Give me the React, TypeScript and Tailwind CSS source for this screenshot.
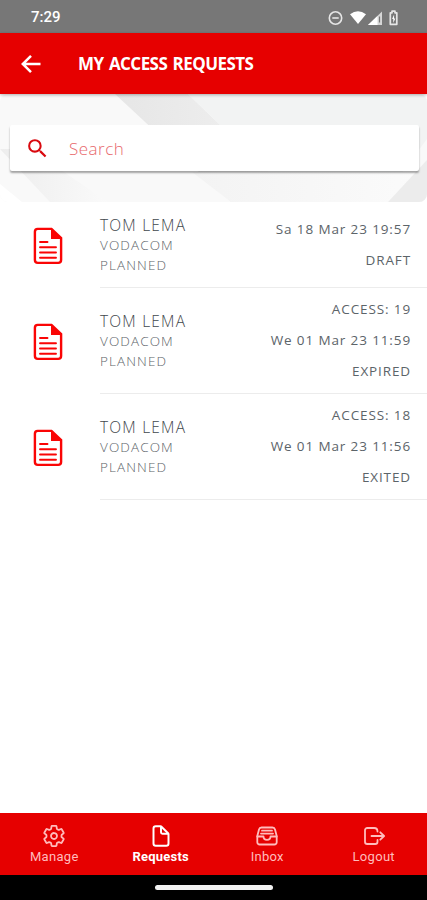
import type { ReactNode } from "react";
import { IoDocumentOutline, IoSettingsOutline } from "react-icons/io5";
import { MdSearch } from "react-icons/md";

type AccessRequest = {
  id: string;
  name: string;
  company: string;
  type: string;
  details: string[];
};

const REQUESTS: AccessRequest[] = [
  {
    id: "draft",
    name: "TOM LEMA",
    company: "VODACOM",
    type: "PLANNED",
    details: ["Sa 18 Mar 23 19:57", "DRAFT"],
  },
  {
    id: "19",
    name: "TOM LEMA",
    company: "VODACOM",
    type: "PLANNED",
    details: ["ACCESS: 19", "We 01 Mar 23 11:59", "EXPIRED"],
  },
  {
    id: "18",
    name: "TOM LEMA",
    company: "VODACOM",
    type: "PLANNED",
    details: ["ACCESS: 18", "We 01 Mar 23 11:56", "EXITED"],
  },
];

function InboxIcon() {
  return (
    <svg
      width="24"
      height="24"
      viewBox="0 0 24 24"
      fill="none"
      stroke="currentColor"
      strokeWidth="1.8"
      strokeLinecap="round"
      strokeLinejoin="round"
    >
      <path d="M2.300 12L4 5.500Q4.500 3.500 6.500 3.500h11Q19.500 3.500 20 5.500L21.700 12V18.200a2.300 2.300 0 0 1-2.300 2.300H4.600a2.300 2.300 0 0 1-2.300-2.300z" />
      <path d="M2.300 12.500h6.200c0 2 1.500 3.300 3.500 3.300s3.500-1.300 3.500-3.300H21.700M7 6.700h10M6 9.600h12" />
    </svg>
  );
}

function LogoutIcon() {
  return (
    <svg
      width="24"
      height="24"
      viewBox="0 0 24 24"
      fill="none"
      stroke="currentColor"
      strokeWidth="1.8"
      strokeLinecap="round"
      strokeLinejoin="round"
    >
      <path d="M15.500 16v1.700a2.300 2.300 0 0 1-2.300 2.300H5.300a2.300 2.300 0 0 1-2.300-2.300v-11.400a2.300 2.300 0 0 1 2.300-2.300h6.900q3.300 0 3.300 3.500" />
      <path d="M9.500 12h12.500M18.300 8.300l3.800 3.700-3.800 3.700" />
    </svg>
  );
}

const TABS: { label: string; icon: ReactNode; active?: boolean }[] = [
  {
    label: "Manage",
    icon: <IoSettingsOutline className="[&_path]:[stroke-width:38px]" />,
  },
  {
    label: "Requests",
    icon: <IoDocumentOutline className="[&_path]:[stroke-width:42px]" />,
    active: true,
  },
  { label: "Inbox", icon: <InboxIcon /> },
  { label: "Logout", icon: <LogoutIcon /> },
];

function StatusBar() {
  return (
    <div className="flex h-[33px] shrink-0 items-center justify-between bg-[#777777] pr-[27px] pl-[31px] text-white">
      <span className="pt-px font-['Roboto',sans-serif] text-[15px] font-medium">7:29</span>
      <svg width="72" height="16" viewBox="0 0 72 16" className="mt-[2px]">
        <circle cx="7.500" cy="8" r="6.2" fill="none" stroke="#e6e6e6" strokeWidth="1.6" />
        <path d="M4.300 8h6.4" stroke="#e6e6e6" strokeWidth="1.6" />
        <path d="M22 4.200Q30 -1.500 38 4.200L30 14z" fill="#fff" />
        <path d="M40 15L54 1.500V15z" fill="#d6d6d6" />
        <path d="M40 15L49.500 6V15z" fill="#fff" />
        <path d="M51.500 6.500v6" stroke="#777777" strokeWidth="1.200" />
        <path
          d="M62.300 2.800h1.700V1.200h3v1.600h1.800v11.500h-6.500z"
          fill="none"
          stroke="#e6e6e6"
          strokeWidth="1.700"
          strokeLinejoin="round"
        />
        <path d="M66.100 4.500L64.100 9h1.200v4l2-4.500H66.100z" fill="#fff" />
      </svg>
    </div>
  );
}

function Header() {
  return (
    <header className="relative z-10 flex h-[61px] shrink-0 items-center bg-[#e60000] text-white shadow-[0_1px_3px_rgba(0,0,0,0.3)]">
      <svg
        width="26"
        height="26"
        viewBox="0 0 26 26"
        className="ml-[18px]"
        fill="none"
        stroke="currentColor"
        strokeWidth="2.500"
      >
        <path d="M22.500 13H5M13 4.800L4.800 13l8.200 8.200" />
      </svg>
      <h1 className="ml-[34px] font-['Open_Sans',sans-serif] text-[17px] font-bold tracking-[-0.550px] [word-spacing:1.5px] whitespace-nowrap">
        MY ACCESS REQUESTS
      </h1>
    </header>
  );
}

function SearchPanel() {
  return (
    <section className="relative h-[108px] shrink-0 overflow-hidden rounded-lg pr-[8px] pl-[10px] pt-[31px]">
      <svg
        className="absolute inset-0"
        width="427"
        height="108"
        viewBox="0 0 427 108"
        preserveAspectRatio="none"
      >
        <defs>
          <linearGradient id="band" x1="0" y1="0" x2="1" y2="0">
            <stop offset="0" stopColor="#e6e6e6" />
            <stop offset="1" stopColor="#f2f2f2" />
          </linearGradient>
          <linearGradient id="fold" x1="0" y1="0" x2="1" y2="0">
            <stop offset="0" stopColor="#ededed" />
            <stop offset="1" stopColor="#fafafa" />
          </linearGradient>
          <linearGradient id="base" x1="0" y1="0" x2="1" y2="0">
            <stop offset="0" stopColor="#f3f3f3" />
            <stop offset="1" stopColor="#fbfbfb" />
          </linearGradient>
        </defs>
        <rect width="427" height="108" fill="#f9f9f9" />
        <path d="M115 0H188L300 108H231z" fill="url(#band)" />
        <path d="M188 0H427V45L380 108H300z" fill="#f2f3f3" />
        <path d="M192 78H427V108H231z" fill="url(#base)" />
        <path d="M0 55L50 108H108L30 55z" fill="url(#fold)" />
        <path d="M0 90L22 108H0z" fill="#ffffff" />
        <path d="M427 66V108H388z" fill="#ececec" />
      </svg>
      <label className="relative flex h-[46px] items-center rounded-[2px] bg-white shadow-[0_2px_2px_rgba(0,0,0,0.35)]">
        <MdSearch className="ml-[15px] size-[25px] text-[#d9090f]" />
        <input
          type="text"
          placeholder="Search"
          className="ml-[19px] w-60 pt-px font-['Open_Sans',sans-serif] text-[17px] font-light tracking-[0.500px] outline-none placeholder:text-[#e8686c]"
        />
      </label>
    </section>
  );
}

function RequestIcon() {
  return (
    <svg width="30" height="38" viewBox="0 0 30 38">
      <path
        d="M4.700 1.900H18.500L28.100 11V33a2.900 2.900 0 0 1-2.900 2.900H4.800a2.900 2.900 0 0 1-2.900-2.900V4.800a2.900 2.900 0 0 1 2.800-2.900z"
        fill="#fff"
        stroke="#fa0505"
        strokeWidth="2.400"
      />
      <path d="M18 1.500L29 12H18z" fill="#fa0505" />
      <path
        d="M7 15h7.500M7 20.300h16M7 25.500h16M7 30.800h16"
        stroke="#fa0505"
        strokeWidth="1.900"
        strokeLinecap="round"
      />
    </svg>
  );
}

function RequestRow({ request }: { request: AccessRequest }) {
  return (
    <li className="flex h-[106px] pl-[33px] first:h-[86px]">
      <div className="flex w-[67px] shrink-0 items-center pt-[2px]">
        <RequestIcon />
      </div>
      <div className="flex grow items-center justify-between border-b border-[#ececec] pr-[16px] text-[#5c6469]">
        <div className="text-[13.500px] leading-5 font-light tracking-[1.100px]">
          <p className="text-[15.500px] tracking-[1.200px] text-[#3f474c]">{request.name}</p>
          <p>{request.company}</p>
          <p>{request.type}</p>
        </div>
        <div className="text-right text-[13.500px] leading-[30.700px] tracking-[0.880px]">
          {request.details.map((line) => (
            <p key={line}>{line}</p>
          ))}
        </div>
      </div>
    </li>
  );
}

function TabBar() {
  return (
    <nav className="grid h-[62px] shrink-0 grid-cols-4 bg-[#e60000] pl-px font-['Roboto',sans-serif]">
      {TABS.map((tab) => (
        <button
          key={tab.label}
          type="button"
          className={
            tab.active
              ? "flex flex-col items-center pt-[11px] text-[13px] leading-[18px] font-bold tracking-[0.200px] text-white"
              : "flex flex-col items-center pt-[11px] text-[13px] leading-[18px] tracking-[0.300px] text-[#ffbcbc]"
          }
        >
          <span className="text-[24px]">{tab.icon}</span>
          {tab.label}
        </button>
      ))}
    </nav>
  );
}

export default function App() {
  return (
    <div className="flex h-[900px] w-[427px] flex-col overflow-hidden bg-white font-['Open_Sans',sans-serif]">
      <StatusBar />
      <Header />
      <SearchPanel />
      <ul className="grow">
        {REQUESTS.map((request) => (
          <RequestRow key={request.id} request={request} />
        ))}
      </ul>
      <TabBar />
      <div className="flex h-[25px] shrink-0 items-center justify-center bg-black">
        <div className="h-[5px] w-[118px] rounded-full bg-[#f2f2f2]" />
      </div>
    </div>
  );
}
